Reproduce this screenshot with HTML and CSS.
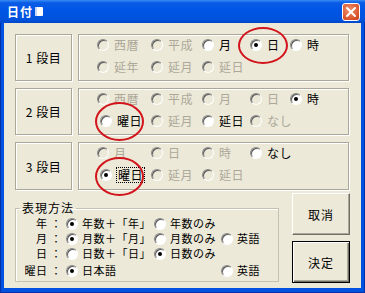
FILE: index.html
```html
<!DOCTYPE html>
<html lang="ja">
<head>
<meta charset="utf-8">
<title>日付</title>
<link rel="stylesheet" href="styles.css">
</head>
<body>
<div class="window">
  <div class="titlebar">
    <span class="title">日付</span><span class="title-icon"></span>
    <span class="close"><svg width="12" height="12" viewBox="0 0 12 12"><path d="M2 2 L10 10 M10 2 L2 10" stroke="#fff" stroke-width="2" stroke-linecap="round"/></svg></span>
  </div>
  <div class="client">
    <div class="row">
      <div class="label">1 段目</div>
      <div class="opts">
        <div class="line">
          <span class="opt dis"><i class="radio"></i>西暦</span>
          <span class="opt dis"><i class="radio"></i>平成</span>
          <span class="opt"><i class="radio"></i>月</span>
          <span class="opt"><i class="radio on"></i>日</span>
          <span class="opt"><i class="radio"></i>時</span>
        </div>
        <div class="line">
          <span class="opt dis"><i class="radio"></i>延年</span>
          <span class="opt dis"><i class="radio"></i>延月</span>
          <span class="opt dis"><i class="radio"></i>延日</span>
        </div>
      </div>
    </div>
    <div class="row">
      <div class="label">2 段目</div>
      <div class="opts">
        <div class="line">
          <span class="opt dis"><i class="radio"></i>西暦</span>
          <span class="opt dis"><i class="radio"></i>平成</span>
          <span class="opt dis"><i class="radio"></i>月</span>
          <span class="opt dis"><i class="radio"></i>日</span>
          <span class="opt"><i class="radio on"></i>時</span>
        </div>
        <div class="line">
          <span class="opt shift"><i class="radio"></i>曜日</span>
          <span class="opt dis"><i class="radio"></i>延月</span>
          <span class="opt"><i class="radio"></i>延日</span>
          <span class="opt dis"><i class="radio"></i>なし</span>
        </div>
      </div>
    </div>
    <div class="row tall">
      <div class="label">3 段目</div>
      <div class="opts">
        <div class="line">
          <span class="opt dis"><i class="radio"></i>月</span>
          <span class="opt dis"><i class="radio"></i>日</span>
          <span class="opt dis"><i class="radio"></i>時</span>
          <span class="opt"><i class="radio"></i>なし</span>
        </div>
        <div class="line">
          <span class="opt shift"><i class="radio on"></i><span class="focus">曜日</span></span>
          <span class="opt dis"><i class="radio"></i>延月</span>
          <span class="opt dis"><i class="radio"></i>延日</span>
        </div>
      </div>
    </div>
    <div class="bottom">
      <fieldset class="group">
        <legend>表現方法</legend>
        <div class="erows">
          <div class="erow">
            <span class="elabel">年 ：</span>
            <span class="opt"><i class="radio on"></i>年数＋「年」</span>
            <span class="opt"><i class="radio"></i>年数のみ</span>
          </div>
          <div class="erow">
            <span class="elabel">月 ：</span>
            <span class="opt"><i class="radio on"></i>月数＋「月」</span>
            <span class="opt"><i class="radio"></i>月数のみ</span>
            <span class="opt"><i class="radio"></i>英語</span>
          </div>
          <div class="erow">
            <span class="elabel">日 ：</span>
            <span class="opt"><i class="radio"></i>日数＋「日」</span>
            <span class="opt"><i class="radio on"></i>日数のみ</span>
          </div>
          <div class="erow last">
            <span class="elabel">曜日 ：</span>
            <span class="opt"><i class="radio on"></i>日本語</span>
            <span class="opt empty"></span>
            <span class="opt"><i class="radio"></i>英語</span>
          </div>
        </div>
      </fieldset>
      <div class="buttons">
        <button class="btn">取消</button>
        <button class="btn default">決定</button>
      </div>
    </div>
  </div>
  <div class="mark m1"></div>
  <div class="mark m2"></div>
  <div class="mark m3"></div>
</div>
</body>
</html>
```

FILE: styles.css
```css
* { box-sizing: border-box; }
html, body { margin: 0; padding: 0; }
body {
  font-family: "Noto Sans CJK JP", "Noto Sans", sans-serif;
  font-size: 12px;
  color: #000;
  background: #fff;
}
.window {
  position: relative;
  width: 365px;
  height: 293px;
  background: #0053e1;
  display: flex;
  flex-direction: column;
  padding: 0 4px 5px 4px;
  box-shadow: inset 1px 0 #0831a8, inset -1px 0 #0831a8, inset 0 -1px #0831a8;
}
.titlebar {
  height: 23px;
  margin: 0 -4px;
  padding: 0 7px;
  display: flex;
  align-items: center;
  background: linear-gradient(#3b8cf5 0%, #0a5ce6 12%, #0055e5 45%, #0052dc 85%, #0047c8 100%);
}
.title {
  color: #fff;
  font-weight: bold;
  font-size: 12px;
  letter-spacing: 1px;
  line-height: 14px;
}
.title-icon {
  width: 8px;
  height: 9px;
  margin-left: 2px;
  background: #fff;
  border-radius: 1px;
  box-shadow: inset 2px 0 #c9d8f5;
}
.close {
  margin-left: auto;
  margin-right: -2px;
  width: 18px;
  height: 18px;
  border: 1px solid #fff;
  border-radius: 3px;
  background: radial-gradient(circle at 40% 35%, #f0906a, #d9532c 70%, #c2401c);
  display: flex;
  align-items: center;
  justify-content: center;
}
.client {
  flex: 1;
  background: #ece9d8;
  padding: 11px 0 0 11px;
  display: flex;
  flex-direction: column;
  gap: 7px;
}
.row {
  display: flex;
  gap: 6px;
  height: 47px;
}
.row.tall { height: 48px; }
.label, .opts {
  border: 1px solid #aca899;
  box-shadow: inset 1px 1px #fff, 1px 1px #fff;
}
.label {
  width: 57px;
  display: flex;
  align-items: center;
  justify-content: center;
  letter-spacing: 0.5px;
}
.opts {
  width: 271px;
  padding: 3px 0 0 18px;
  display: flex;
  flex-direction: column;
  gap: 8px;
}
.line {
  display: grid;
  grid-template-columns: 54px 51px 48px 40px 1fr;
  height: 14px;
}
.opt {
  display: flex;
  align-items: center;
  gap: 5px;
  line-height: 14px;
  white-space: nowrap;
  letter-spacing: 0.5px;
}
.opt.dis { color: #aca899; }
.opt.shift { margin-left: 3px; }
.radio {
  position: relative;
  flex: none;
  width: 12px;
  height: 12px;
  border-radius: 50%;
  border: 1px solid;
  border-color: #8a8a8a #fff #fff #8a8a8a;
  background: #fff;
  box-shadow: inset 1px 1px #5a5a5a;
}
.opt.dis .radio { background: #ece9d8; }
.radio.on::after {
  content: "";
  position: absolute;
  left: 3px;
  top: 3px;
  width: 4px;
  height: 4px;
  border-radius: 50%;
  background: #000;
}
.focus {
  outline: 1px dotted #000;
  outline-offset: 0;
  padding: 0 1px;
}
.bottom {
  display: flex;
  align-items: flex-start;
}
.group {
  margin: 4px 0 0 0;
  padding: 0;
  width: 264px;
  height: 81px;
  min-width: 0;
  border: 1px solid #c5c2b2;
  box-shadow: inset 1px 1px #fff;
}
.group legend {
  margin-left: 4px;
  padding: 0 2px;
  line-height: 14px;
  letter-spacing: 1px;
}
.erows {
  padding-top: 1px;
}
.erow {
  display: grid;
  grid-template-columns: 46px 84px 63px 1fr;
  column-gap: 4px;
  height: 15px;
  line-height: 15px;
  align-items: center;
}
.erow .opt {
  gap: 4px;
  font-size: 11px;
  letter-spacing: 0.5px;
  line-height: 15px;
}
.erow.last { margin-top: 2px; }
.elabel {
  text-align: right;
  white-space: nowrap;
  font-size: 11px;
  letter-spacing: 0.5px;
  line-height: 15px;
}
.buttons {
  margin: -4px 0 0 13px;
  display: flex;
  flex-direction: column;
  gap: 6px;
}
.btn {
  width: 58px;
  height: 42px;
  padding: 0;
  background: #ece9d8;
  border: 1px solid;
  border-color: #fff #716f64 #716f64 #fff;
  box-shadow: inset -1px -1px #aca899;
  font-family: inherit;
  font-size: 12px;
  color: #000;
  letter-spacing: 1px;
}
.btn.default {
  border: 1px solid #000;
  box-shadow: inset 1px 1px #fff, inset -1px -1px #716f64, inset -2px -2px #aca899;
}
.mark {
  position: absolute;
  border: 2px solid #d2141c;
  border-radius: 50%;
  pointer-events: none;
}
.m1 { left: 238px; top: 27px; width: 50px; height: 37px; }
.m2 { left: 95px; top: 102px; width: 49px; height: 39px; }
.m3 { left: 95px; top: 157px; width: 49px; height: 39px; }
```
